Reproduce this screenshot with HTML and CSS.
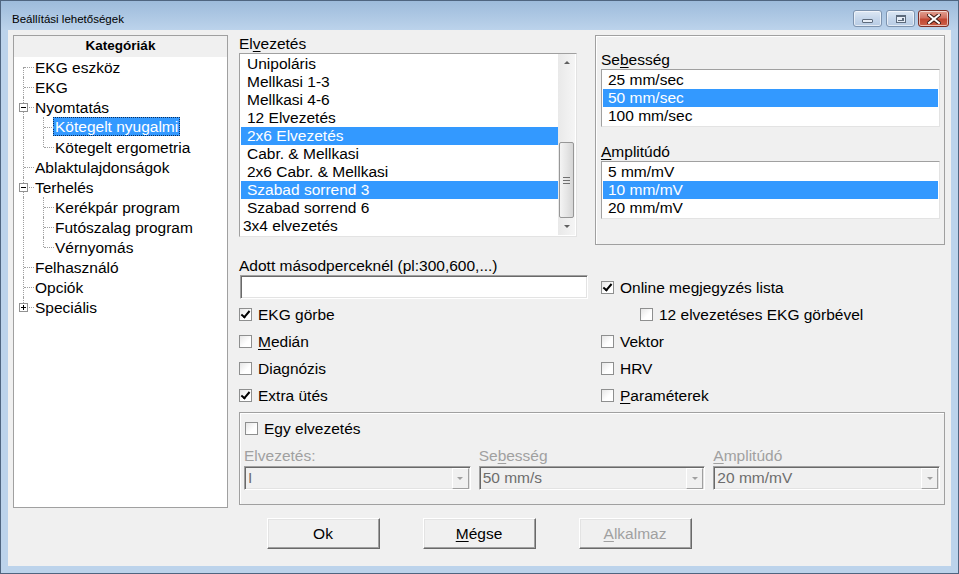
FILE: index.html
```html
<!DOCTYPE html>
<html lang="hu">
<head>
    <meta charset="UTF-8">
    <title>Beállítási lehetőségek</title>
    <link rel="stylesheet" href="styles.css">
</head>
<body>
    <div class="window">
        <div class="titlebar">
            <span class="title">Beállítási lehetőségek</span>
            <div class="caption-btns">
                <span class="cap-btn min"><i></i></span>
                <span class="cap-btn max"><i></i></span>
                <span class="cap-btn close">
                    <svg width="14" height="10" viewBox="0 0 14 10">
                        <path d="M2 1 L12 9 M12 1 L2 9" stroke="#3c1a14" stroke-width="4" stroke-linecap="square"/>
                        <path d="M2 1 L12 9 M12 1 L2 9" stroke="#fff" stroke-width="2" stroke-linecap="square"/>
                    </svg>
                </span>
            </div>
        </div>

        <div class="client">
            <div class="main">
                <!-- Kategóriák -->
                <div class="tree-panel">
                    <div class="tree-head">Kategóriák</div>
                    <ul class="tree">
                        <li class="node"><span class="ln first"></span><span class="label">EKG eszköz</span></li>
                        <li class="node"><span class="ln tee"></span><span class="label">EKG</span></li>
                        <li class="node"><span class="ln tee"><span class="exp"></span></span><span class="label">Nyomtatás</span></li>
                        <li class="node"><span class="ln pipe"></span><span class="ln tee"></span><span class="label selected">Kötegelt nyugalmi</span></li>
                        <li class="node"><span class="ln pipe"></span><span class="ln ell"></span><span class="label">Kötegelt ergometria</span></li>
                        <li class="node"><span class="ln tee"></span><span class="label">Ablaktulajdonságok</span></li>
                        <li class="node"><span class="ln tee"><span class="exp"></span></span><span class="label">Terhelés</span></li>
                        <li class="node"><span class="ln pipe"></span><span class="ln tee"></span><span class="label">Kerékpár program</span></li>
                        <li class="node"><span class="ln pipe"></span><span class="ln tee"></span><span class="label">Futószalag program</span></li>
                        <li class="node"><span class="ln pipe"></span><span class="ln ell"></span><span class="label">Vérnyomás</span></li>
                        <li class="node"><span class="ln tee"></span><span class="label">Felhasználó</span></li>
                        <li class="node"><span class="ln tee"></span><span class="label">Opciók</span></li>
                        <li class="node"><span class="ln ell"><span class="exp plus"></span></span><span class="label">Speciális</span></li>
                    </ul>
                </div>

                <div class="content">
                    <div class="top-row">
                        <div class="lead-box">
                            <div class="caption">El<u>v</u>ezetés</div>
                            <div class="listbox lead-list">
                                <ul class="items">
                                    <li>Unipoláris</li>
                                    <li>Mellkasi 1-3</li>
                                    <li>Mellkasi 4-6</li>
                                    <li>12 Elvezetés</li>
                                    <li class="sel">2x6 Elvezetés</li>
                                    <li>Cabr. &amp; Mellkasi</li>
                                    <li>2x6 Cabr. &amp; Mellkasi</li>
                                    <li class="sel">Szabad sorrend 3</li>
                                    <li>Szabad sorrend 6</li>
                                    <li class="flush">3x4 elvezetés</li>
                                </ul>
                                <div class="vscroll">
                                    <span class="arrow up"></span>
                                    <span class="thumb"><i></i></span>
                                    <span class="arrow down"></span>
                                </div>
                            </div>
                        </div>

                        <div class="group speed-group">
                            <div class="caption">Se<u>b</u>esség</div>
                            <ul class="listbox small-list">
                                <li>25 mm/sec</li>
                                <li class="sel">50 mm/sec</li>
                                <li>100 mm/sec</li>
                            </ul>
                            <div class="caption amp-caption"><u>A</u>mplitúdó</div>
                            <ul class="listbox small-list">
                                <li>5 mm/mV</li>
                                <li class="sel">10 mm/mV</li>
                                <li>20 mm/mV</li>
                            </ul>
                        </div>
                    </div>

                    <div class="options">
                        <div class="opt-col">
                            <div class="caption">Adott másodperceknél (pl:300,600,...)</div>
                            <div class="textbox"></div>
                            <div class="checks">
                                <div class="check on"><span class="box"></span>EKG görbe</div>
                                <div class="check"><span class="box"></span><span><u>M</u>edián</span></div>
                                <div class="check"><span class="box"></span>Diagnózis</div>
                                <div class="check on"><span class="box"></span>Extra ütés</div>
                            </div>
                        </div>
                        <div class="opt-col right">
                            <div class="check on"><span class="box"></span>Online megjegyzés lista</div>
                            <div class="check sub"><span class="box"></span>12 elvezetéses EKG görbével</div>
                            <div class="check"><span class="box"></span>Vektor</div>
                            <div class="check"><span class="box"></span>HRV</div>
                            <div class="check"><span class="box"></span><span><u>P</u>araméterek</span></div>
                        </div>
                    </div>

                    <div class="group single-lead">
                        <div class="check single"><span class="box"></span>Egy elvezetés</div>
                        <div class="combo-row">
                            <div class="field">
                                <div class="caption disabled">Elvezetés:</div>
                                <div class="combo"><span>I</span><span class="drop"></span></div>
                            </div>
                            <div class="field">
                                <div class="caption disabled">Se<u>b</u>esség</div>
                                <div class="combo"><span>50 mm/s</span><span class="drop"></span></div>
                            </div>
                            <div class="field">
                                <div class="caption disabled"><u>A</u>mplitúdó</div>
                                <div class="combo"><span>20 mm/mV</span><span class="drop"></span></div>
                            </div>
                        </div>
                    </div>
                </div>
            </div>

            <div class="buttons">
                <button class="btn">Ok</button>
                <button class="btn"><u>M</u>égse</button>
                <button class="btn" disabled><u>A</u>lkalmaz</button>
            </div>
        </div>
    </div>
</body>
</html>
```

FILE: styles.css
```css
* {
    margin: 0;
    padding: 0;
    box-sizing: border-box;
}

body {
    font-family: "Liberation Sans", Arial, sans-serif;
    font-size: 15.5px;
    color: #000;
    background: #fff;
}

ul {
    list-style: none;
}

u {
    text-decoration: underline;
    text-underline-offset: 2px;
}

/* Window frame */
.window {
    width: 959px;
    height: 574px;
    border: 1px solid #4f6580;
    background: linear-gradient(#9dbbdb, #bcd3eb 29px, #bcd3eb);
    display: flex;
    flex-direction: column;
}

.titlebar {
    height: 29px;
    display: flex;
    justify-content: space-between;
    align-items: flex-start;
}

.title {
    font-size: 11.5px;
    line-height: 14px;
    padding: 11px 0 0 11px;
}

.caption-btns {
    display: flex;
    gap: 4px;
    padding: 9px 9px 0 0;
}

.cap-btn {
    height: 17px;
    width: 29px;
    border: 1px solid #7d93ae;
    border-radius: 3px;
    background: linear-gradient(#dde8f4, #c6d7eb 50%, #b7cbe3);
    box-shadow: inset 0 0 0 1px rgba(255, 255, 255, 0.6);
    display: flex;
    align-items: center;
    justify-content: center;
}

.cap-btn.min i {
    width: 11px;
    height: 4px;
    margin-top: 5px;
    border: 1px solid #5d6b7c;
    border-radius: 1px;
    background: #e7eef7;
}

.cap-btn.max i {
    width: 10px;
    height: 8px;
    border: 1px solid #5d6b7c;
    border-top-width: 2px;
    box-shadow: inset 0 0 0 1px #e7eef7;
    background: #5d6b7c;
    position: relative;
}

.cap-btn.max i::after {
    content: "";
    position: absolute;
    left: 1px;
    top: 1px;
    width: 4px;
    height: 2px;
    background: #e7eef7;
}

.cap-btn.close {
    width: 31px;
    margin-left: -1px;
    border-color: #7c2e25;
    background: linear-gradient(#e2a091, #d27161 45%, #c24732 55%, #cc6048);
}

/* Client area */
.client {
    flex: 1;
    margin: 0 7px 7px 7px;
    background: #f0f0f0;
    padding: 5px 6px 0 5px;
}

.main {
    display: flex;
    gap: 11px;
    height: 473px;
}

/* Tree */
.tree-panel {
    width: 215px;
    border: 1px solid #a0a0a0;
    background: #fff;
}

.tree-head {
    height: 21px;
    line-height: 20px;
    background: #f0f0f0;
    text-align: center;
    font-weight: bold;
    font-size: 13.5px;
}

.node {
    display: flex;
    height: 20px;
    line-height: 21px;
}

.ln {
    width: 20px;
    height: 20px;
    flex: none;
    position: relative;
}

.ln::before {
    content: "";
    position: absolute;
    left: 9px;
    top: 0;
    bottom: 0;
    border-left: 1px dotted #a0a0a0;
}

.ln.first::before {
    top: 10px;
}

.ln.ell::before {
    bottom: 10px;
}

.ln::after {
    content: "";
    position: absolute;
    left: 10px;
    top: 10px;
    width: 10px;
    border-top: 1px dotted #a0a0a0;
}

.ln.pipe::after {
    display: none;
}

.exp {
    position: absolute;
    left: 5px;
    top: 6px;
    width: 9px;
    height: 9px;
    border: 1px solid #919191;
    background: #fff;
    z-index: 1;
}

.exp::before {
    content: "";
    position: absolute;
    left: 1px;
    top: 3px;
    width: 5px;
    height: 1px;
    background: #000;
}

.exp.plus::after {
    content: "";
    position: absolute;
    left: 3px;
    top: 1px;
    width: 1px;
    height: 5px;
    background: #000;
}

.label {
    margin-left: -1px;
    padding: 0 2px;
    white-space: nowrap;
}

.label.selected {
    background: #3399ff;
    color: #fff;
    height: 19px;
    line-height: 20px;
    outline: 1px dotted #0c2f5c;
    outline-offset: -1px;
}

/* Right side */
.content {
    width: 706px;
}

.caption {
    line-height: 18px;
    white-space: nowrap;
}

.caption.disabled {
    color: #a0a0a0;
}

.top-row {
    display: flex;
    gap: 18px;
}

.lead-box {
    width: 338px;
}

.listbox {
    background: #fff;
    border: 1px solid;
    border-color: #a0a0a0 #e3e3e3 #e3e3e3 #a0a0a0;
}

.lead-list {
    height: 184px;
    display: flex;
    padding: 1px;
}

.items {
    width: 317px;
}

.items li,
.small-list li {
    height: 18px;
    line-height: 18px;
    padding-left: 6px;
    white-space: nowrap;
}

.items li.flush {
    padding-left: 2px;
}

.sel {
    background: #3399ff;
    color: #fff;
}

.vscroll {
    width: 17px;
    margin-top: -1px;
    background: linear-gradient(to right, #e9e9e9, #f5f5f5);
    display: flex;
    flex-direction: column;
}

.arrow {
    height: 17px;
    display: flex;
    align-items: center;
    justify-content: center;
}

.arrow::before {
    content: "";
    border-left: 3px solid transparent;
    border-right: 3px solid transparent;
}

.arrow.up::before {
    border-bottom: 3px solid #606060;
}

.arrow.down {
    margin-top: auto;
}

.arrow.down::before {
    border-top: 3px solid #606060;
}

.thumb {
    margin-top: 71px;
    height: 76px;
    margin-left: 1px;
    width: 15px;
    border: 1px solid #979797;
    border-radius: 2px;
    background: linear-gradient(to right, #f4f4f4, #e6e6e6 50%, #d6d6d6);
    display: flex;
    align-items: center;
    justify-content: center;
}

.thumb i {
    width: 7px;
    height: 7px;
    background: linear-gradient(#707070 1px, transparent 1px, transparent 3px, #707070 3px, #707070 4px, transparent 4px, transparent 6px, #707070 6px);
}

.group {
    border: 1px solid #a0a0a0;
    box-shadow: inset 1px 1px 0 #fff;
}

.speed-group {
    width: 350px;
    height: 210px;
    padding: 16px 4px 0 5px;
}

.small-list {
    margin-top: 1px;
    padding: 1px;
}

.amp-caption {
    margin-top: 17px;
    line-height: 16px;
}

.speed-group .caption:first-child {
    line-height: 16px;
}

.small-list li {
    padding-left: 5px;
}

/* Checkboxes and text */
.options {
    display: flex;
    margin-top: 12px;
}

.opt-col {
    width: 362px;
}

.opt-col.right {
    width: auto;
    padding-top: 17px;
}

.textbox {
    width: 348px;
    height: 24px;
    margin-left: 1px;
    background: #fff;
    border: 1px solid;
    border-color: #a0a0a0 #fff #fff #a0a0a0;
    box-shadow: inset 1px 1px 0 #696969, inset -1px -1px 0 #e3e3e3;
}

.checks {
    margin-top: 2px;
}

.check {
    display: flex;
    align-items: center;
    gap: 6px;
    height: 27px;
    line-height: 27px;
    white-space: nowrap;
}

.box {
    width: 13px;
    height: 13px;
    flex: none;
    border: 1px solid #8e8f8f;
    background: linear-gradient(135deg, #e6e6e6, #fff 60%);
    position: relative;
}

.check.on .box::after {
    content: "";
    position: absolute;
    left: 3px;
    top: 0;
    width: 3px;
    height: 7px;
    border: solid #000;
    border-width: 0 2px 2px 0;
    transform: rotate(40deg);
}

.check.sub {
    margin-left: 39px;
}

/* Single lead group */
.single-lead {
    margin-top: 3px;
    height: 93px;
    padding: 2px 4px 0 4px;
}

.check.single {
    margin-left: 1px;
}

.combo-row {
    display: grid;
    grid-template-columns: repeat(3, 1fr);
    gap: 8px;
    margin-top: 6px;
}

.combo-row .caption {
    line-height: 16px;
}

.combo {
    margin-top: 2px;
    height: 24px;
    border: 1px solid;
    border-color: #a0a0a0 #fff #fff #a0a0a0;
    box-shadow: inset 1px 1px 0 #696969, inset -1px -1px 0 #e3e3e3;
    background: #f0f0f0;
    color: #6d6d6d;
    display: flex;
    align-items: center;
    justify-content: space-between;
    padding: 1px 1px 1px 3px;
    line-height: 20px;
}

.drop {
    width: 17px;
    height: 21px;
    border: 1px solid;
    border-color: #fff #a0a0a0 #a0a0a0 #fff;
    background: #f0f0f0;
    display: flex;
    align-items: center;
    justify-content: center;
}

.drop::before {
    content: "";
    border-left: 3px solid transparent;
    border-right: 3px solid transparent;
    border-top: 3px solid #a0a0a0;
}

/* Buttons */
.buttons {
    display: flex;
    justify-content: center;
    gap: 43px;
    margin-top: 10px;
}

.btn {
    width: 113px;
    height: 31px;
    font-family: inherit;
    font-size: 15.5px;
    color: #000;
    background: #f0f0f0;
    border: 1px solid;
    border-color: #fff #696969 #696969 #fff;
    box-shadow: inset -1px -1px 0 #a0a0a0, inset 1px 1px 0 #e3e3e3;
}

.btn:disabled {
    color: #a0a0a0;
}
```
